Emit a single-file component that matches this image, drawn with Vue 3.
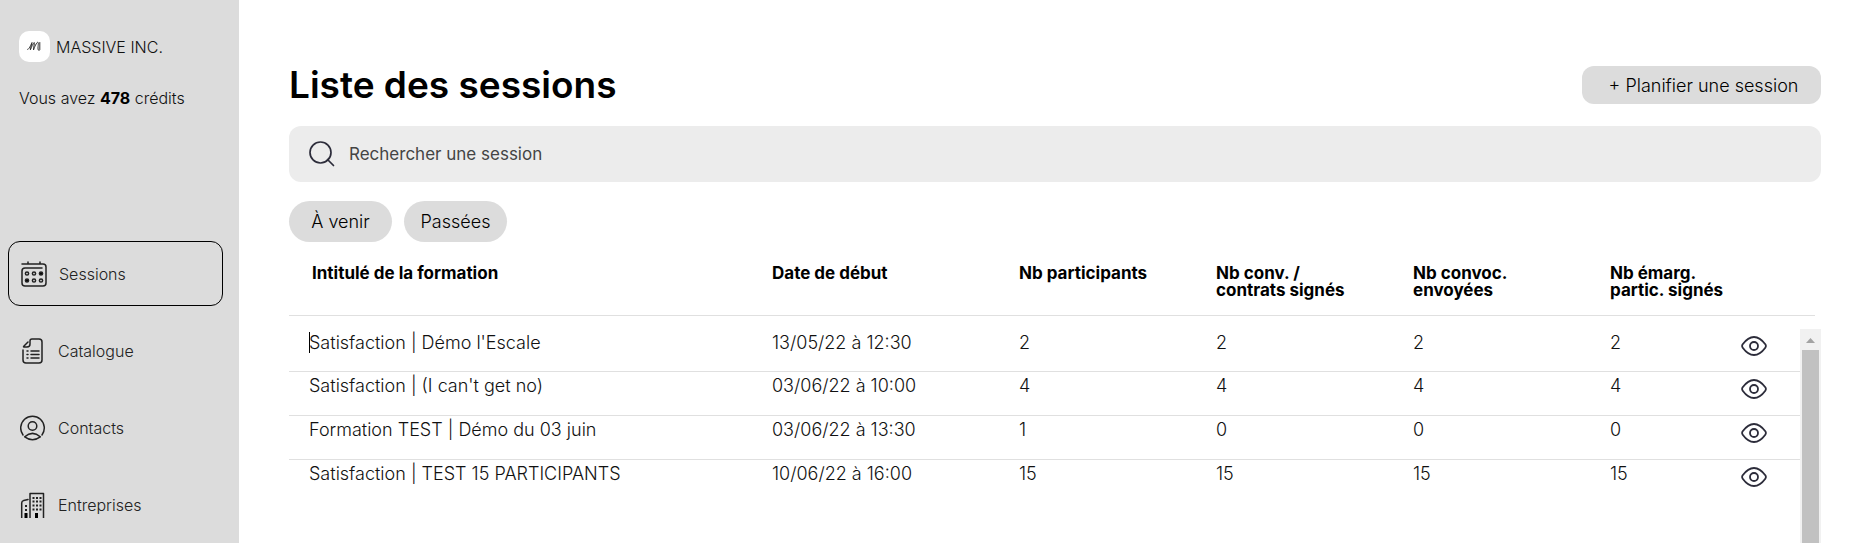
<script setup>
const navItems = [
  { id: 'sessions', label: 'Sessions', active: true },
  { id: 'catalogue', label: 'Catalogue' },
  { id: 'contacts', label: 'Contacts' },
  { id: 'entreprises', label: 'Entreprises' },
]

const columns = [
  ['Intitulé de la formation'],
  ['Date de début'],
  ['Nb participants'],
  ['Nb conv. /', 'contrats signés'],
  ['Nb convoc.', 'envoyées'],
  ['Nb émarg.', 'partic. signés'],
]

const sessions = [
  { title: "Satisfaction | Démo l'Escale", values: ['13/05/22 à 12:30', 2, 2, 2, 2] },
  { title: "Satisfaction | (I can't get no)", values: ['03/06/22 à 10:00', 4, 4, 4, 4] },
  { title: 'Formation TEST | Démo du 03 juin', values: ['03/06/22 à 13:30', 1, 0, 0, 0] },
  { title: 'Satisfaction | TEST 15 PARTICIPANTS', values: ['10/06/22 à 16:00', 15, 15, 15, 15] },
]
</script>

<template>
  <div class="layout">
    <aside class="sidebar">
      <div class="company">
        <span class="logo">
          <svg viewBox="0 0 31 31" aria-hidden="true">
            <path d="M8.500 18.500C9.500 19.500 12 14 13 11.500C12.500 14 11.500 17 11.300 19C12.500 16 14 12.500 15.200 11.500C15.600 13 14.500 16.500 14.500 19C15.500 16 17.500 11.500 18.800 11.200C20.200 11.500 18.300 17 19.300 19C19.900 19.800 20.600 19.500 20.800 18.500V11.500" />
          </svg>
        </span>
        <span class="company-name">MASSIVE INC.</span>
      </div>
      <p class="credits">Vous avez <strong>478</strong> crédits</p>

      <nav class="nav">
        <a v-for="item in navItems" :key="item.id" :href="'#' + item.id" class="nav-item" :class="{ active: item.active }">
          <svg v-if="item.id === 'sessions'" class="nav-icon" viewBox="0 0 26 26" aria-hidden="true">
            <path d="M1 3H22Q25 3 25 6V22Q25 25 22 25H4Q1 25 1 22V10Q1 7 4 7H21M7 1V3M19 1V3" />
            <circle cx="6" cy="12.500" r="1.600" /><circle cx="13" cy="12.500" r="1.600" />
            <circle class="solid" cx="20" cy="12.500" r="1.600" /><circle class="solid" cx="6" cy="19.500" r="1.600" />
            <circle cx="13" cy="19.500" r="1.600" /><circle cx="20" cy="19.500" r="1.600" />
          </svg>
          <svg v-else-if="item.id === 'catalogue'" class="nav-icon" viewBox="0 0 26 26" aria-hidden="true">
            <path d="M3 12V22Q3 25 6 25H19Q22 25 22 22V4Q22 1 19 1H12Q10 1 10 3V6Q10 9 7 9H4Q3 9 4 8L8 4" />
            <path d="M11 13H19M11 16.500H19M11 20H19M7 13H8M7 16.500H8M7 20H8" />
          </svg>
          <svg v-else-if="item.id === 'contacts'" class="nav-icon" viewBox="0 0 26 26" aria-hidden="true">
            <path d="M3 20A11.800 11.800 0 1 1 22 20M4.700 21.800Q12.500 15 20.300 21.800Q12.500 27.500 4.700 21.800Z" />
            <circle cx="12.500" cy="11" r="4.300" />
          </svg>
          <svg v-else class="nav-icon" viewBox="0 0 26 26" aria-hidden="true">
            <path d="M10 26V1.500H23.500V26M1.700 26V11Q1.700 9 3.700 8.500L8 7.500" />
            <path class="windows" d="M12.500 6H22M12.500 9.500H22M12.500 13.500H22M12.500 17.500H22M5 14H8.500M5 18H8.500" />
            <path class="door" d="M16.500 21V26M6 21V26" />
          </svg>
          <span>{{ item.label }}</span>
        </a>
      </nav>
    </aside>

    <main class="main">
      <header class="heading">
        <h1>Liste des sessions</h1>
        <button type="button" class="plan">+ Planifier une session</button>
      </header>

      <label class="search">
        <svg viewBox="0 0 26 26" aria-hidden="true">
          <circle cx="11.500" cy="11.500" r="10.500" /><path d="M18.500 18.500L24.500 24.500" />
        </svg>
        <input type="search" placeholder="Rechercher une session" aria-label="Rechercher une session" />
      </label>

      <div class="filters">
        <button type="button">À venir</button>
        <button type="button">Passées</button>
      </div>

      <div class="sessions">
        <table>
          <thead>
            <tr>
              <th v-for="column in columns" :key="column[0]" scope="col">
                <span v-for="line in column" :key="line">{{ line }}</span>
              </th>
            </tr>
          </thead>
          <tbody>
            <tr v-for="(session, index) in sessions" :key="session.title">
              <td class="title"><i v-if="index === 0" class="caret"></i>{{ session.title }}</td>
              <td v-for="(value, i) in session.values" :key="i">{{ value }}</td>
              <td class="action">
                <button type="button" :aria-label="'Voir ' + session.title">
                  <svg viewBox="0 0 26 20" aria-hidden="true">
                    <path d="M1.700 8.300C4.500 4.500 8 1 13 1S21.500 4.500 24.300 8.300Q25.500 10 24.300 11.700C21.500 15.500 18 19 13 19S4.500 15.500 1.700 11.700Q.5 10 1.700 8.300Z" />
                    <circle cx="13" cy="10" r="4" />
                  </svg>
                </button>
              </td>
            </tr>
          </tbody>
        </table>
        <div class="scrollbar" aria-hidden="true">
          <svg viewBox="0 0 21 21"><path d="M6 14L10.500 9L15 14Z" /></svg>
          <div class="thumb"></div>
        </div>
      </div>
    </main>
  </div>
</template>

<style>
body {
  margin: 0;
  background: #fff;
}
</style>

<style scoped>
.layout {
  display: flex;
  height: 100vh;
  overflow: hidden;
  font-family: Inter, "Liberation Sans", sans-serif;
  font-size: 18px;
  font-weight: 300;
  color: #111;
}

button,
input {
  border: 0;
  padding: 0;
  font: inherit;
  color: #000;
}

svg {
  display: block;
  flex: none;
  fill: none;
  stroke: #222;
  stroke-linecap: round;
  stroke-linejoin: round;
}

.sidebar {
  flex: none;
  box-sizing: border-box;
  width: 239px;
  padding: 31px 16px 0 8px;
  background: #dcdcdc;
  font-size: 16px;
}

.company {
  display: flex;
  align-items: center;
  gap: 6px;
  padding-left: 11px;
}

.logo {
  width: 31px;
  height: 31px;
  border-radius: 10px;
  background: #fff;
}

.logo svg {
  stroke: #333;
  stroke-width: 1;
}

.credits {
  margin: 24px 0 0;
  padding-left: 11px;
  line-height: 24px;
}

.credits strong {
  font-weight: 700;
  color: #000;
}

.nav {
  display: flex;
  flex-direction: column;
  gap: 12px;
  margin-top: 131px;
}

.nav-item {
  box-sizing: border-box;
  display: flex;
  align-items: center;
  gap: 12px;
  height: 65px;
  padding-left: 12px;
  color: #222;
  text-decoration: none;
}

.nav-item.active {
  border: 1px solid #000;
  border-radius: 12px;
}

.nav-icon {
  width: 26px;
  height: 26px;
  stroke-width: 1.5;
}

.nav-icon .solid {
  fill: #000;
}

.nav-icon .windows {
  stroke-width: 2;
  stroke-linecap: butt;
  stroke-dasharray: 2 1.500;
}

.nav-icon .door {
  stroke: #000;
  stroke-width: 3;
  stroke-linecap: butt;
}

.main {
  flex: 1;
  min-width: 0;
  display: flex;
  flex-direction: column;
  padding: 61px 37px 0 50px;
}

.heading {
  display: flex;
  align-items: center;
  justify-content: space-between;
}

h1 {
  margin: 0;
  font-size: 37px;
  line-height: 48px;
  font-weight: 600;
  color: #000;
}

.plan {
  width: 239px;
  height: 38px;
  padding-left: 4px;
  border-radius: 12px;
  background: #dcdcdc;
}

.search {
  display: flex;
  align-items: center;
  gap: 14px;
  height: 56px;
  margin-top: 17px;
  padding: 0 20px;
  border-radius: 12px;
  background: #ececec;
}

.search svg {
  width: 26px;
  height: 26px;
  stroke: #2c2c3a;
  stroke-width: 1.7;
}

.search input {
  flex: 1;
  min-width: 0;
  outline: 0;
  background: transparent;
  font-size: 17px;
  font-weight: 400;
  appearance: none;
}

.search input::placeholder {
  color: #444;
  opacity: 1;
}

.filters {
  display: flex;
  gap: 12px;
  margin-top: 19px;
}

.filters button {
  width: 103px;
  height: 41px;
  border-radius: 21px;
  background: #dcdcdc;
}

.sessions {
  position: relative;
  flex: 1;
  min-height: 0;
}

table,
thead,
tbody {
  display: block;
}

tr {
  display: grid;
  grid-template-columns: 463fr 247fr 197fr 197fr 197fr 131fr 59fr;
  padding-left: 20px;
}

th,
td {
  padding: 0;
  text-align: left;
  white-space: nowrap;
}

thead tr {
  height: 50px;
  margin-right: 6px;
  padding-top: 23px;
  padding-right: 15px;
  border-bottom: 1px solid #e0e0e0;
}

th {
  font-size: 17px;
  line-height: 17px;
  font-weight: 700;
  color: #000;
}

th:first-child {
  padding-left: 3px;
}

th span {
  display: block;
}

tbody {
  margin: 13px 21px 0 0;
}

tbody tr {
  height: 43px;
  border-bottom: 1px solid #e0e0e0;
}

tbody tr:first-child {
  height: 42px;
}

tbody tr:last-child {
  border-bottom: 0;
}

td {
  line-height: 28px;
}

.title {
  position: relative;
}

.caret {
  position: absolute;
  top: 3px;
  left: 0;
  width: 1px;
  height: 21px;
  background: #000;
}

.action button {
  display: block;
  margin-top: 7px;
  background: transparent;
}

.action svg {
  width: 26px;
  height: 20px;
  stroke: #2c2c3a;
  stroke-width: 1.8;
}

.scrollbar {
  position: absolute;
  top: 87px;
  right: 0;
  bottom: 0;
  display: flex;
  flex-direction: column;
  width: 21px;
  background: #f1f1f1;
}

.scrollbar svg {
  width: 21px;
  height: 21px;
  fill: #a3a3a3;
  stroke: none;
}

.thumb {
  flex: 1;
  margin: 0 2px;
  background: #c1c1c1;
}
</style>
